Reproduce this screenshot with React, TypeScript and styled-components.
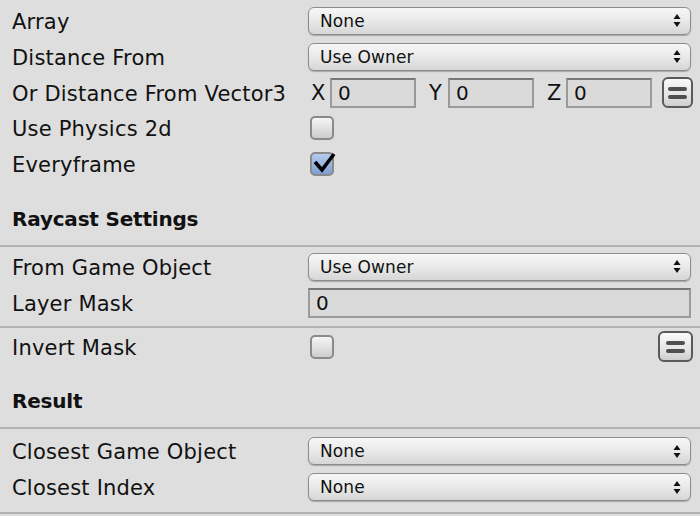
import React from "react";
import styled, { createGlobalStyle } from "styled-components";

const Global = createGlobalStyle`
  html, body { margin: 0; padding: 0; background: #dedede; }
  body { font-family: "DejaVu Sans", "Lucida Grande", sans-serif; color: #111; }
`;

const Panel = styled.div`
  width: 700px;
  height: 516px;
  background: #dedede;
  display: flex;
  flex-direction: column;
  padding-top: 3px;
  box-sizing: border-box;
  overflow: hidden;
`;

const Row = styled.div`
  display: grid;
  grid-template-columns: 308px 1fr;
  align-items: center;
  height: 36px;
  padding-right: 9px;
  box-sizing: border-box;
`;

const Label = styled.div`
  padding-left: 12px;
  font-size: 21px;
  white-space: nowrap;
  letter-spacing: 0.2px;
  padding-top: 2px;
`;

const Value = styled.div`
  display: flex;
  align-items: center;
  min-width: 0;
`;

const Heading = styled.div<{ $h: number }>`
  height: ${(p) => p.$h}px;
  display: flex;
  align-items: flex-end;
  padding: 0 0 14px 12px;
  box-sizing: border-box;
  font-size: 20px;
  font-weight: bold;
  letter-spacing: -0.2px;
`;

const Divider = styled.div<{ $after?: number }>`
  height: 2px;
  background: #b3b3b3;
  margin-bottom: ${(p) => p.$after ?? 2}px;
`;

const Spacer = styled.div<{ $h: number }>`
  height: ${(p) => p.$h}px;
`;

const DropdownBox = styled.div`
  flex: 1;
  height: 28px;
  box-sizing: border-box;
  border: 1px solid #8c8c8c;
  border-radius: 6px;
  background: linear-gradient(#f7f7f7, #e9e9e9 50%, #d6d6d6);
  box-shadow: 0 1px 1px rgba(0, 0, 0, 0.25);
  display: flex;
  align-items: center;
  justify-content: space-between;
  padding: 0 9px 0 11px;
  font-size: 17px;
  letter-spacing: 0.1px;
`;

const TextField = styled.div`
  flex: 1;
  height: 30px;
  box-sizing: border-box;
  border: 2px solid #9a9a9a;
  border-top-color: #777;
  background: #dadada;
  display: flex;
  align-items: center;
  padding-left: 6px;
  font-size: 20px;
`;

const VectorGroup = styled.div`
  display: grid;
  grid-template-columns: 22px 86px;
  align-items: center;
  margin-right: 10px;
  &:last-of-type { margin-right: 4px; }
`;

const AxisLabel = styled.span`
  font-size: 21px;
  padding-left: 3px;
`;

const IconButton = styled.div<{ $push?: boolean }>`
  width: 35px;
  height: 31px;
  box-sizing: border-box;
  border: 2px solid #5a5a5a;
  border-radius: 6px;
  background: linear-gradient(#fafafa, #e4e4e4 60%, #cfcfcf);
  display: flex;
  flex-direction: column;
  align-items: center;
  justify-content: center;
  gap: 4px;
  margin-right: -2px;
  margin-left: ${(p) => (p.$push ? "auto" : "0")};
`;

const Bar = styled.div`
  width: 19px;
  height: 4px;
  border-radius: 2px;
  background: #4f4f4f;
`;

const CheckBox = styled.div<{ $on?: boolean }>`
  position: relative;
  width: 24px;
  height: 24px;
  margin-left: 2px;
  box-sizing: border-box;
  border: 2px solid #8a8a8a;
  border-radius: 5px;
  background: ${(p) =>
    p.$on
      ? "linear-gradient(#b4cbec, #7f9fd2)"
      : "linear-gradient(#f6f6f6, #cdcdcd)"};
`;

const CheckMark = styled.svg`
  position: absolute;
  left: -2px;
  top: -2px;
  overflow: visible;
`;

function Arrows() {
  return (
    <svg width="8" height="13" viewBox="0 0 8 13">
      <path d="M4 0 L7.5 5 L0.5 5 Z" fill="#111" />
      <path d="M4 13 L7.5 8 L0.5 8 Z" fill="#111" />
    </svg>
  );
}

function Dropdown({ value }: { value: string }) {
  return (
    <DropdownBox>
      <span>{value}</span>
      <Arrows />
    </DropdownBox>
  );
}

function Check({ on }: { on?: boolean }) {
  return (
    <CheckBox $on={on}>
      {on && (
        <CheckMark width="26" height="24" viewBox="0 0 26 24">
          <path
            d="M5 10 L12 18 L24 2"
            stroke="#000"
            strokeWidth="3.6"
            fill="none"
            strokeLinecap="butt"
            strokeLinejoin="miter"
          />
        </CheckMark>
      )}
    </CheckBox>
  );
}

function EqButton({ push }: { push?: boolean }) {
  return (
    <IconButton $push={push}>
      <Bar />
      <Bar />
    </IconButton>
  );
}

export default function App() {
  return (
    <>
      <Global />
      <Panel>
        <Row>
          <Label>Array</Label>
          <Value><Dropdown value="None" /></Value>
        </Row>
        <Row>
          <Label>Distance From</Label>
          <Value><Dropdown value="Use Owner" /></Value>
        </Row>
        <Row>
          <Label>Or Distance From Vector3</Label>
          <Value>
            {["X", "Y", "Z"].map((a) => (
              <VectorGroup key={a}>
                <AxisLabel>{a}</AxisLabel>
                <TextField>0</TextField>
              </VectorGroup>
            ))}
            <EqButton />
          </Value>
        </Row>
        <Row>
          <Label>Use Physics 2d</Label>
          <Value><Check /></Value>
        </Row>
        <Row>
          <Label>Everyframe</Label>
          <Value><Check on /></Value>
        </Row>
        <Heading $h={63}>Raycast Settings</Heading>
        <Divider $after={2} />
        <Row>
          <Label>From Game Object</Label>
          <Value><Dropdown value="Use Owner" /></Value>
        </Row>
        <Row>
          <Label>Layer Mask</Label>
          <Value><TextField>0</TextField></Value>
        </Row>
        <Spacer $h={5} />
        <Divider $after={1} />
        <Row>
          <Label>Invert Mask</Label>
          <Value>
            <Check />
            <EqButton push />
          </Value>
        </Row>
        <Heading $h={63}>Result</Heading>
        <Divider $after={4} />
        <Row>
          <Label>Closest Game Object</Label>
          <Value><Dropdown value="None" /></Value>
        </Row>
        <Row>
          <Label>Closest Index</Label>
          <Value><Dropdown value="None" /></Value>
        </Row>
        <Spacer $h={7} />
        <Divider />
      </Panel>
    </>
  );
}
